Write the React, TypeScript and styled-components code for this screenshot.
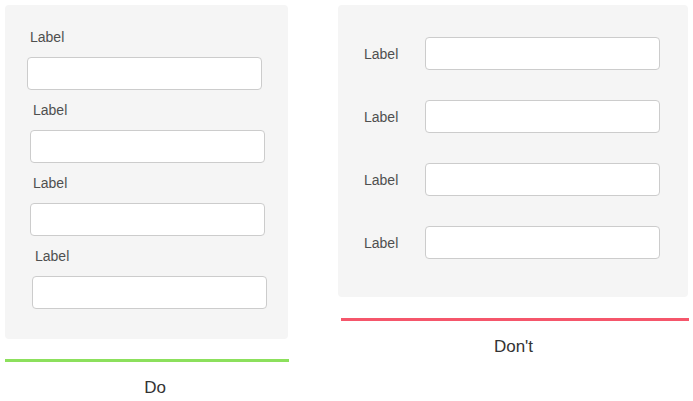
import React from "react";
import styled, { createGlobalStyle } from "styled-components";

const GlobalStyle = createGlobalStyle`
  html, body { margin: 0; padding: 0; background: #ffffff; }
  body { font-family: "Liberation Sans", Arial, Helvetica, sans-serif; }
  * { box-sizing: border-box; }
`;

const Page = styled.div`
  display: flex;
  align-items: flex-start;
  gap: 49px;
  padding: 5px 0 0 5px;
  width: 693px;
  height: 401px;
`;

const Column = styled.div<{ $width: number }>`
  display: flex;
  flex-direction: column;
  width: ${(p) => p.$width}px;
`;

const Panel = styled.div<{ $width: number; $pad: string; $gap: number }>`
  width: ${(p) => p.$width}px;
  background: #f5f5f5;
  border-radius: 4px;
  padding: ${(p) => p.$pad};
  display: flex;
  flex-direction: column;
  gap: ${(p) => p.$gap}px;
`;

const StackedField = styled.div<{ $shift: number }>`
  display: flex;
  flex-direction: column;
  gap: 12px;
  margin-left: ${(p) => p.$shift}px;
`;

const InlineField = styled.div`
  display: flex;
  align-items: center;
`;

const Label = styled.label<{ $inline?: boolean }>`
  font-size: 14px;
  line-height: 16px;
  color: #4f4f4f;
  padding-left: ${(p) => (p.$inline ? 0 : 3)}px;
  width: ${(p) => (p.$inline ? "61px" : "auto")};
  flex-shrink: 0;
`;

const Input = styled.input`
  width: 235px;
  height: 33px;
  border: 1px solid #cccccc;
  border-radius: 4px;
  background: #ffffff;
  padding: 0 8px;
  font: inherit;
  outline: none;
`;

const Rule = styled.div<{ $color: string; $top: number; $left: number; $width: number }>`
  height: 3px;
  background: ${(p) => p.$color};
  margin-top: ${(p) => p.$top}px;
  margin-left: ${(p) => p.$left}px;
  width: ${(p) => p.$width}px;
`;

const Caption = styled.div<{ $shift: number }>`
  margin-top: 16px;
  font-size: 17px;
  line-height: 20px;
  color: #333333;
  text-align: center;
  padding-left: ${(p) => p.$shift}px;
`;

const doShifts = [0, 3, 3, 5];

export default function App() {
  return (
    <>
      <GlobalStyle />
      <Page>
        <Column $width={284}>
          <Panel $width={283} $pad="24px 0 30px 22px" $gap={12}>
            {doShifts.map((s, i) => (
              <StackedField key={i} $shift={s}>
                <Label>Label</Label>
                <Input type="text" />
              </StackedField>
            ))}
          </Panel>
          <Rule $color="#8ce05c" $top={20} $left={0} $width={284} />
          <Caption $shift={16}>Do</Caption>
        </Column>
        <Column $width={351}>
          <Panel $width={350} $pad="32px 28px 38px 26px" $gap={30}>
            {[0, 1, 2, 3].map((i) => (
              <InlineField key={i}>
                <Label $inline>Label</Label>
                <Input type="text" />
              </InlineField>
            ))}
          </Panel>
          <Rule $color="#f5566b" $top={21} $left={3} $width={348} />
          <Caption $shift={0}>Don't</Caption>
        </Column>
      </Page>
    </>
  );
}
